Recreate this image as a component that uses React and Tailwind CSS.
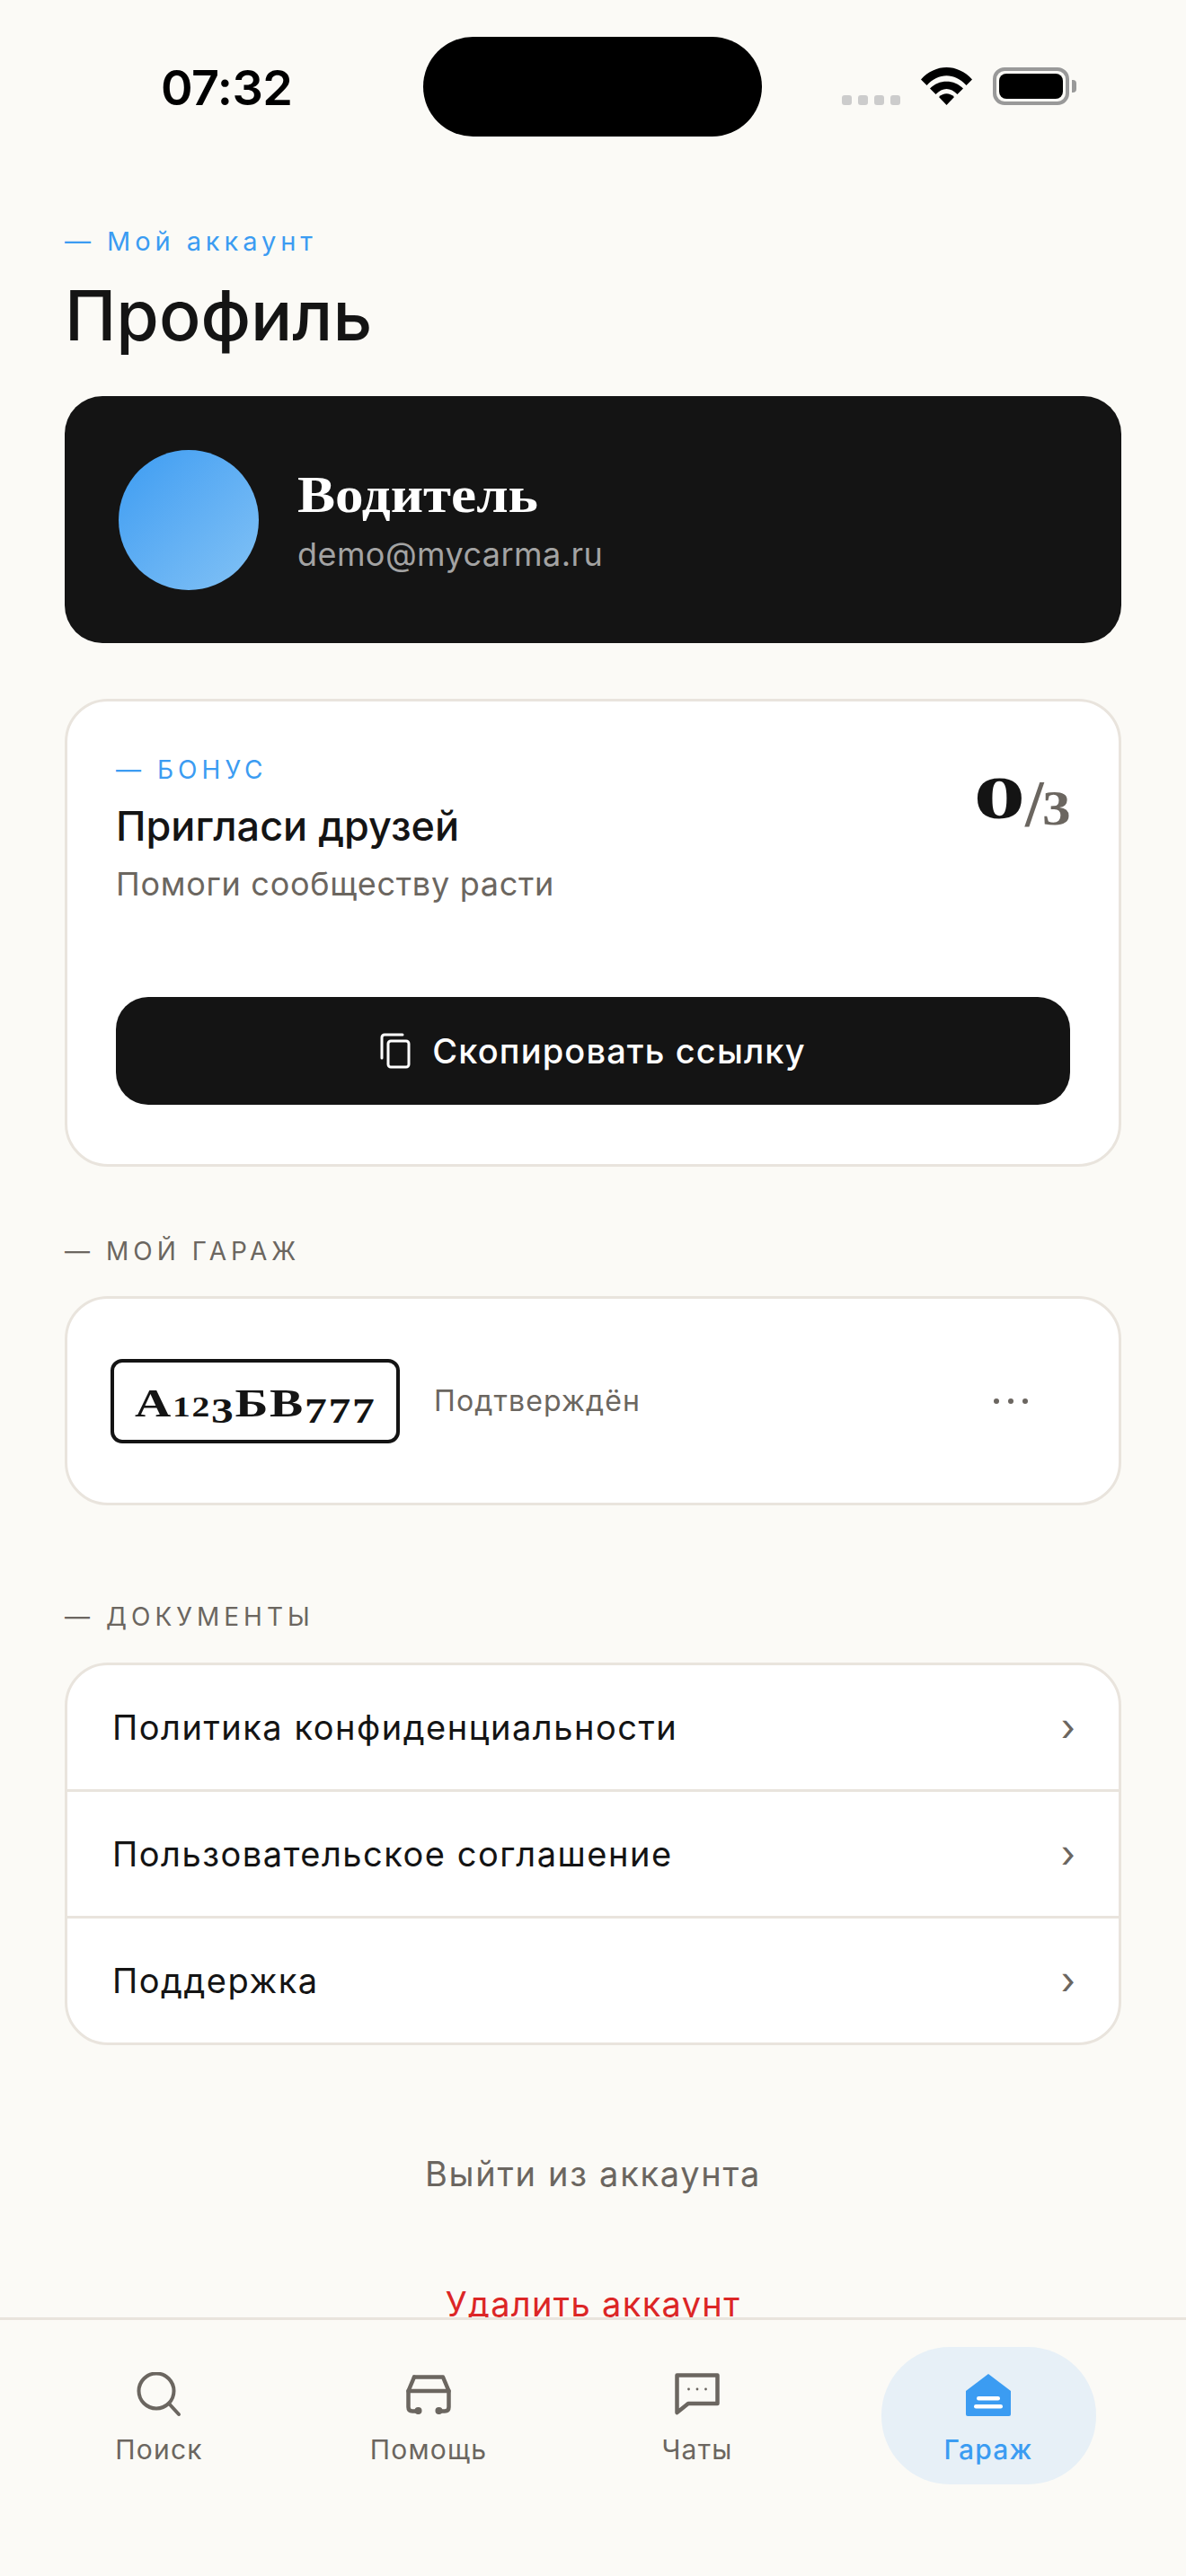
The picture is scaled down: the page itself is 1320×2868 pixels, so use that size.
const SERIF = "font-['Liberation_Serif',serif] font-bold";

function Wifi() {
  return (
    <svg width="57" height="42" viewBox="0 0 57 42" fill="#000">
      <path d="M0 13.5 C16 -4.5 41 -4.5 57 13.5 L50.5 20 C37.5 5.5 19.5 5.5 6.5 20 Z" />
      <path d="M10 23.5 C20 13 37 13 47 23.5 L40.5 30 C33 22 24 22 16.5 30 Z" />
      <path d="M20 33 C25 28 32 28 37 33 L28.5 42 Z" />
    </svg>
  );
}

function Battery() {
  return (
    <div className="flex items-center gap-[3px]">
      <div className="w-[85px] h-[42px] rounded-[13px] border-[4px] border-[#999999] p-[3px]">
        <div className="w-full h-full rounded-[8px] bg-black" />
      </div>
      <div className="w-[5px] h-[14px] rounded-r-[4px] bg-[#999999]" />
    </div>
  );
}

function StatusBar() {
  return (
    <div className="h-[200px] shrink-0 relative">
      <div className="absolute left-[471px] top-[41px] w-[377px] h-[111px] rounded-[56px] bg-black" />
      <div className="absolute left-[179px] top-[65px] text-[54px] leading-[65px] font-semibold tracking-[-0.01em] text-black">07:32</div>
      <div className="absolute left-[937px] top-[75px] flex items-end h-[42px] gap-[7px]">
        {[0, 1, 2, 3].map((i) => (
          <div key={i} className="w-[11px] h-[11px] rounded-[3px] bg-[#cccccc]" />
        ))}
      </div>
      <div className="absolute left-[1025px] top-[75px]"><Wifi /></div>
      <div className="absolute left-[1105px] top-[75px]"><Battery /></div>
    </div>
  );
}

function SectionLabel({ children }) {
  return (
    <div className="text-[28px] leading-[34px] tracking-[0.18em] text-[#6b6660] uppercase">— {children}</div>
  );
}

function DocRow({ children, last }) {
  return (
    <div className={"flex items-center justify-between pl-[50px] pr-[48px] " + (last ? "h-[138px]" : "h-[141px] border-b-[3px] border-[#e9e4dd]")}>
      <span className="text-[38px] tracking-[0.04em] text-[#141414]">{children}</span>
      <span className="text-[42px] leading-none text-[#6b6660]">›</span>
    </div>
  );
}

function NavItem({ icon, label, active }) {
  return (
    <div className={"flex flex-col items-center pt-[29px] " + (active ? "w-[239px] h-[153px] rounded-[76px] bg-[#e7f0f7] text-[#3b9cf2]" : "text-[#6b6660]")}>
      <div className="h-[48px] flex items-center justify-center">{icon}</div>
      <div className={"mt-[19px] text-[30px] leading-[36px] tracking-[0.04em] " + (active ? "font-medium" : "")}>{label}</div>
    </div>
  );
}

const SearchIcon = (
  <svg width="50" height="50" viewBox="0 0 50 50" fill="none" stroke="#6b6660" strokeWidth="4" strokeLinecap="round">
    <circle cx="22" cy="21" r="19.5" />
    <path d="M36 35 L47 47" />
  </svg>
);
const CarIcon = (
  <svg width="50" height="44" viewBox="0 0 50 44" fill="none" stroke="#6b6660" strokeWidth="4.5" strokeLinecap="round" strokeLinejoin="round">
    <path d="M9 2.5 H41 L47.5 18 V36 C47.5 39 46 40.5 43 40.5 H37" />
    <path d="M9 2.5 L2.5 18 V36 C2.5 39 4 40.5 7 40.5 H13" />
    <path d="M2.5 18 H47.5" />
    <circle cx="13.5" cy="40" r="1.8" fill="#6b6660" />
    <circle cx="36.5" cy="40" r="1.8" fill="#6b6660" />
  </svg>
);
const ChatIcon = (
  <svg width="50" height="48" viewBox="0 0 50 48" fill="none">
    <path d="M2.5 44 V2.5 H47.5 V34 H15 Z" stroke="#6b6660" strokeWidth="4.5" strokeLinejoin="round" />
    <circle cx="15.5" cy="18" r="1.4" fill="#6b6660" />
    <circle cx="25" cy="18" r="1.4" fill="#6b6660" />
    <circle cx="34.5" cy="18" r="1.4" fill="#6b6660" />
  </svg>
);
const GarageIcon = (
  <svg width="50" height="47" viewBox="0 0 50 47">
    <path d="M25 0 L50 19 V45 A2 2 0 0 1 48 47 H2 A2 2 0 0 1 0 45 V19 Z" fill="#3b9cf2" />
    <rect x="12" y="25" width="26" height="4.5" rx="2.2" fill="#fff" />
    <rect x="9" y="34" width="32" height="4.5" rx="2.2" fill="#fff" />
  </svg>
);

function Plate() {
  const small = "text-[32px]";
  const old = "text-[40px] inline-block translate-y-[7px]";
  return (
    <div className={"w-[322px] h-[94px] rounded-[13px] border-[4px] border-[#141414] bg-white flex items-center justify-center text-[#141414] " + SERIF}>
      <span className="inline-block text-[45px] leading-none tracking-[0.03em] scale-x-[1.24] translate-y-[3px] whitespace-nowrap">
        А<span className={small}>12</span><span className={old}>3</span>БВ<span className={old}>777</span>
      </span>
    </div>
  );
}

export default function App() {
  return (
    <div className="relative w-[1320px] h-[2868px] overflow-hidden bg-[#fbfaf6] font-['Inter',sans-serif] flex flex-col">
      <StatusBar />
      <main className="px-[72px] flex-1 flex flex-col">
        <div className="mt-[51px] text-[29px] leading-[36px] tracking-[0.17em] text-[#3b9cf2]">— Мой аккаунт</div>
        <h1 className="mt-[18px] text-[77px] leading-[92px] font-[550] text-[#141414]">Профиль</h1>

        <section className="mt-[44px] h-[275px] rounded-[42px] bg-[#141414] flex items-center pl-[60px] gap-[43px]">
          <div className="w-[156px] h-[156px] rounded-full bg-gradient-to-br from-[#3b9cf2] to-[#82c2f5]" />
          <div className="flex flex-col">
            <div className={"text-[56px] leading-[64px] text-white origin-left scale-x-[1.127] " + SERIF}>Водитель</div>
            <div className="mt-[12px] text-[36px] leading-[44px] tracking-[0.012em] text-[#a3a3a3]">demo@mycarma.ru</div>
          </div>
        </section>

        <section className="mt-[62px] h-[521px] rounded-[48px] border-[3px] border-[#e9e4dd] bg-white px-[54px] pt-[59px] flex flex-col">
          <div className="flex justify-between">
            <div>
              <div className="text-[28px] leading-[34px] tracking-[0.18em] text-[#3b9cf2]">— БОНУС</div>
              <div className="mt-[18px] text-[45px] leading-[56px] font-medium text-[#141414]">Пригласи друзей</div>
              <div className="mt-[14px] text-[36px] leading-[44px] tracking-[0.02em] text-[#6b6660]">Помоги сообществу расти</div>
            </div>
            <div className={"mt-[11px] h-[70px] flex items-baseline text-[68px] leading-[70px] " + SERIF}>
              <span className="inline-block w-[51px] text-center scale-x-[1.7] text-[#141414]">0</span>
              <span className="inline-block text-[74px] text-[#6b6660] translate-y-[9px] ml-[3px]">/</span>
              <span className="inline-block text-[55px] text-[#6b6660] translate-y-[7px] ml-[2px] origin-right scale-x-[1.15]">3</span>
            </div>
          </div>
          <div className="mt-[104px] h-[120px] rounded-[36px] bg-[#141414] flex items-center justify-center gap-[24px] text-white">
            <svg width="34" height="40" viewBox="0 0 34 40" fill="none" stroke="#fff" strokeWidth="3" strokeLinecap="round" strokeLinejoin="round">
              <path d="M2 28 V5 A3 3 0 0 1 5 2 H25" />
              <rect x="9" y="9" width="23" height="29" rx="3" />
            </svg>
            <span className="text-[38px] font-medium tracking-[0.03em]">Скопировать ссылку</span>
          </div>
        </section>

        <div className="mt-[77px]"><SectionLabel>Мой гараж</SectionLabel></div>

        <section className="mt-[33px] h-[233px] rounded-[48px] border-[3px] border-[#e9e4dd] bg-white flex items-center pl-[48px] relative">
          <Plate />
          <span className="ml-[38px] text-[32px] tracking-[0.035em] text-[#6b6660]">Подтверждён</span>
          <div className="ml-auto mr-[101px] flex gap-[10px]">
            <div className="w-[6px] h-[6px] rounded-full bg-[#6b6660]" />
            <div className="w-[6px] h-[6px] rounded-full bg-[#6b6660]" />
            <div className="w-[6px] h-[6px] rounded-full bg-[#6b6660]" />
          </div>
        </section>

        <div className="mt-[107px]"><SectionLabel>Документы</SectionLabel></div>

        <section className="mt-[34px] rounded-[48px] border-[3px] border-[#e9e4dd] bg-white">
          <DocRow>Политика конфиденциальности</DocRow>
          <DocRow>Пользовательское соглашение</DocRow>
          <DocRow last>Поддержка</DocRow>
        </section>

        <div className="mt-[117px] text-center text-[38px] leading-[52px] tracking-[0.045em] text-[#6b6660]">Выйти из аккаунта</div>
        <div className="mt-[93px] text-center text-[38px] leading-[52px] tracking-[0.035em] text-[#dc2626]">Удалить аккаунт</div>
      </main>

      <nav className="absolute left-0 right-0 bottom-0 h-[288px] border-t-[3px] border-[#e9e4dd] bg-[#fbfaf6]">
        <div className="grid grid-cols-[354px_246px_352px_296px] justify-items-center pt-[30px]">
          <NavItem icon={SearchIcon} label="Поиск" />
          <NavItem icon={CarIcon} label="Помощь" />
          <NavItem icon={ChatIcon} label="Чаты" />
          <NavItem icon={GarageIcon} label="Гараж" active />
        </div>
      </nav>
    </div>
  );
}
